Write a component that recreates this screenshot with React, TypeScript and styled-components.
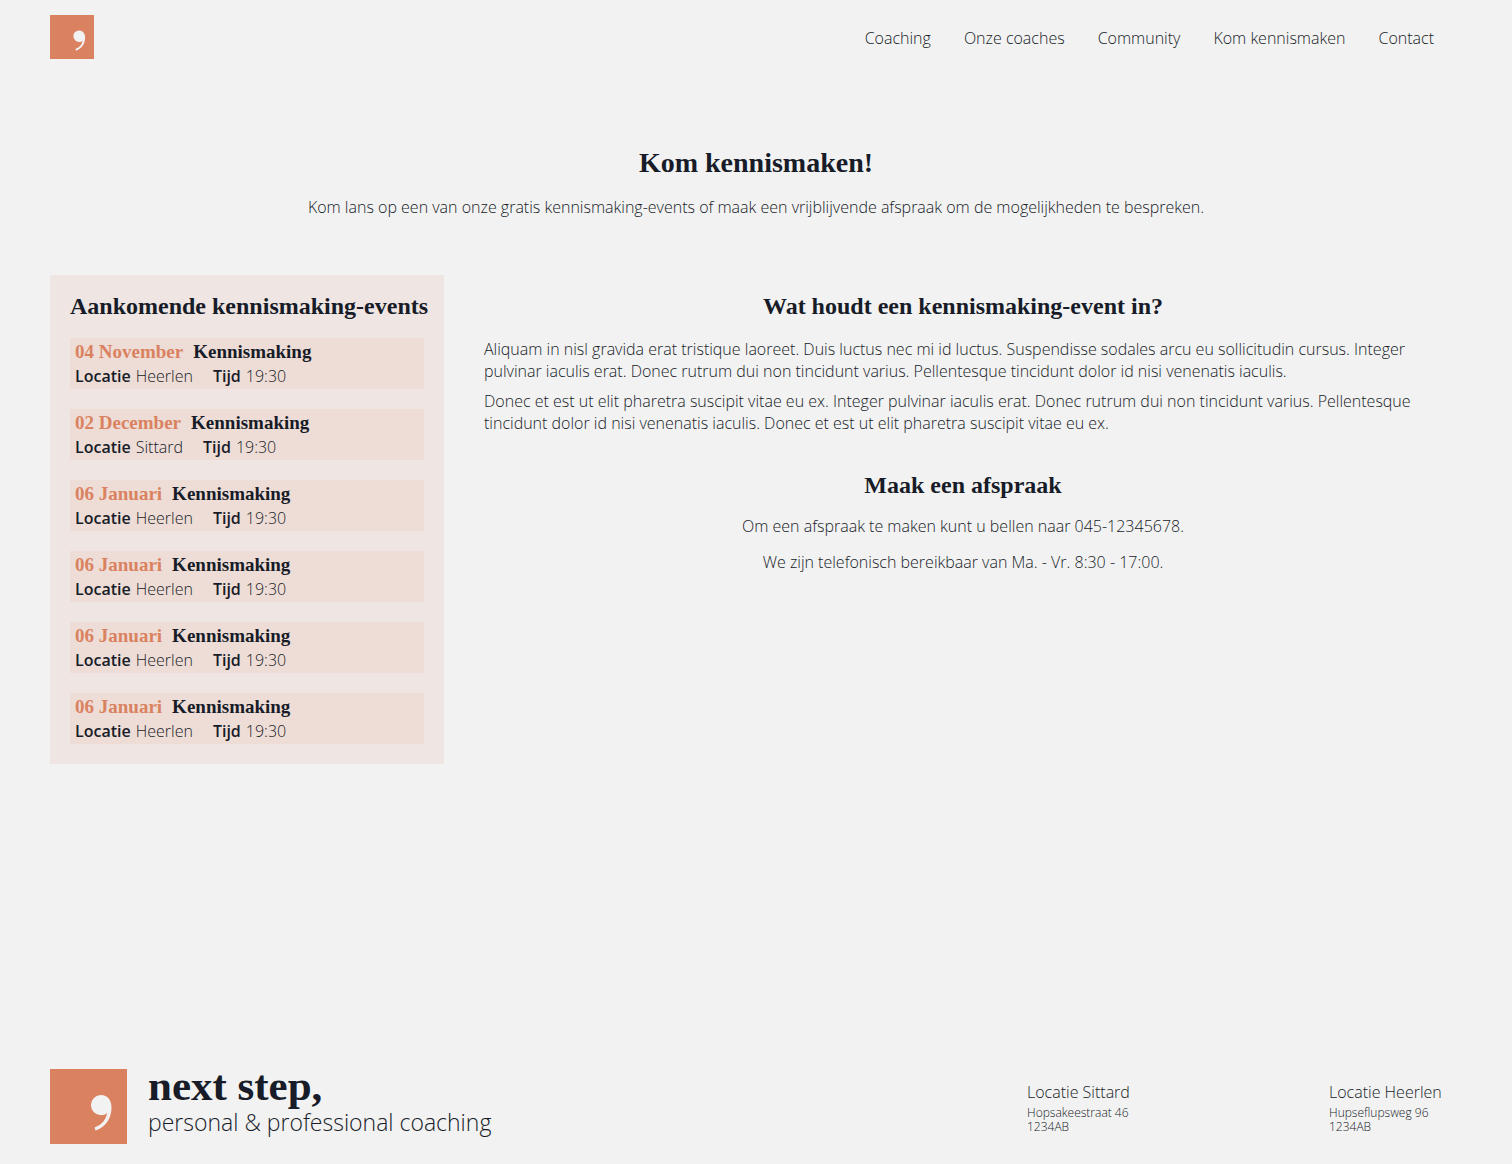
import React from "react";
import styled, { createGlobalStyle } from "styled-components";

const ink = "#171c28";
const paper = "#f2f2f2";
const accent = "#da8260";
const serif = '"Liberation Serif", "Times New Roman", serif';
const sans = '"Open Sans", "Noto Sans", sans-serif';

const GlobalStyle = createGlobalStyle`
  *, *::before, *::after { box-sizing: border-box; }
  body {
    margin: 0;
    background: ${paper};
    color: ${ink};
    font: 300 16px/22px ${sans};
  }
  h1, h2, h3, p, ul, dl, dd { margin: 0; padding: 0; }
`;

const Page = styled.div`
  display: flex;
  flex-direction: column;
  min-height: 100vh;
`;

const Header = styled.header`
  display: flex;
  align-items: center;
  justify-content: space-between;
  padding: 15px 78px 15px 50px;
`;

const HomeLink = styled.a`
  display: block;
`;

const Mark = styled.svg`
  display: block;
  flex: none;
  background: ${accent};
`;

const Nav = styled.nav`
  display: flex;
  gap: 33px;
  padding-top: 2px;
`;

const NavLink = styled.a`
  color: inherit;
  text-decoration: none;
`;

const Intro = styled.section`
  display: flex;
  flex-direction: column;
  align-items: center;
  gap: 18px;
  padding: 74px 50px 57px;
  text-align: center;
`;

const PageTitle = styled.h1`
  font: 700 28px/30px ${serif};
`;

const SectionTitle = styled.h2`
  font: 700 24px/30px ${serif};
  text-align: center;
`;

const Columns = styled.main`
  display: grid;
  grid-template-columns: 394px minmax(0, 1fr);
  align-items: start;
  gap: 40px;
  padding: 0 70px 0 50px;
`;

const Agenda = styled.aside`
  display: flex;
  flex-direction: column;
  gap: 17px;
  padding: 16px 20px 20px;
  background: #efe6e3;
`;

const AgendaTitle = styled(SectionTitle)`
  white-space: nowrap;
`;

const EventList = styled.ul`
  display: grid;
  gap: 20px;
  list-style: none;
`;

const EventCard = styled.li`
  padding: 2px 5px 1px;
  background: #eedcd6;
`;

const EventHeading = styled.h3`
  display: flex;
  gap: 10px;
  font: 700 19px/24px ${serif};
`;

const EventDate = styled.span`
  color: ${accent};
`;

const Facts = styled.dl`
  display: flex;
  gap: 20px;
  line-height: 24px;
`;

const Fact = styled.div`
  display: flex;
  gap: 5px;
`;

const FactName = styled.dt`
  font-weight: 600;
`;

const Article = styled.div`
  display: grid;
  gap: 36px;
  padding-top: 16px;
`;

const Story = styled.section`
  display: grid;
  gap: 8px;

  h2 { margin-bottom: 9px; }
`;

const Appointment = styled.section`
  display: grid;
  gap: 14px;
  text-align: center;

  h2 { margin-bottom: 1px; }
`;

const Footer = styled.footer`
  display: flex;
  align-items: center;
  justify-content: space-between;
  margin-top: auto;
  padding: 40px 70px 20px 50px;
`;

const Brand = styled.div`
  display: flex;
  gap: 21px;
`;

const BrandName = styled.p`
  font: 700 43px/34px ${serif};
`;

const Tagline = styled.p`
  font-size: 23px;
  line-height: 38px;
`;

const Locations = styled.div`
  display: grid;
  grid-template-columns: 302px 113px;
  white-space: nowrap;
`;

const Location = styled.address`
  font-style: normal;
  font-size: 12px;
  line-height: 14px;
`;

const LocationName = styled.p`
  font-size: 16px;
  line-height: 24px;
  padding-bottom: 2px;
`;

const links = ["Coaching", "Onze coaches", "Community", "Kom kennismaken", "Contact"];

const events = [
  { date: "04 November", place: "Heerlen" },
  { date: "02 December", place: "Sittard" },
  { date: "06 Januari", place: "Heerlen" },
  { date: "06 Januari", place: "Heerlen" },
  { date: "06 Januari", place: "Heerlen" },
  { date: "06 Januari", place: "Heerlen" },
];

const locations = [
  { name: "Locatie Sittard", street: "Hopsakeestraat 46", code: "1234AB" },
  { name: "Locatie Heerlen", street: "Hupseflupsweg 96", code: "1234AB" },
];

function Logo({ width, height }: { width: number; height: number }) {
  return (
    <Mark width={width} height={height} viewBox="0 0 77 75" aria-hidden="true">
      <path
        fill={paper}
        d="M51 26C57.500 26 61.500 31 61.500 38.500C61.500 49 56 58 45.500 61.500L44.500 58.500C52 55.500 56 51 57 44C55.500 45.500 53.500 46.200 51 46.200A10.100 10.100 0 0 1 51 26Z"
      />
    </Mark>
  );
}

export default function App() {
  return (
    <>
      <GlobalStyle />
      <Page>
        <Header>
          <HomeLink href="#" aria-label="next step">
            <Logo width={44} height={44} />
          </HomeLink>
          <Nav>
            {links.map((link) => (
              <NavLink href="#" key={link}>{link}</NavLink>
            ))}
          </Nav>
        </Header>

        <Intro>
          <PageTitle>Kom kennismaken!</PageTitle>
          <p>
            Kom lans op een van onze gratis kennismaking-events of maak een vrijblijvende afspraak om
            de mogelijkheden te bespreken.
          </p>
        </Intro>

        <Columns>
          <Agenda>
            <AgendaTitle>Aankomende kennismaking-events</AgendaTitle>
            <EventList>
              {events.map((event, index) => (
                <EventCard key={index}>
                  <EventHeading>
                    <EventDate>{event.date}</EventDate>
                    <span>Kennismaking</span>
                  </EventHeading>
                  <Facts>
                    <Fact>
                      <FactName>Locatie</FactName>
                      <dd>{event.place}</dd>
                    </Fact>
                    <Fact>
                      <FactName>Tijd</FactName>
                      <dd>19:30</dd>
                    </Fact>
                  </Facts>
                </EventCard>
              ))}
            </EventList>
          </Agenda>

          <Article>
            <Story>
              <SectionTitle>Wat houdt een kennismaking-event in?</SectionTitle>
              <p>
                Aliquam in nisl gravida erat tristique laoreet. Duis luctus nec mi id luctus.
                Suspendisse sodales arcu eu sollicitudin cursus. Integer pulvinar iaculis erat. Donec
                rutrum dui non tincidunt varius. Pellentesque tincidunt dolor id nisi venenatis
                iaculis.
              </p>
              <p>
                Donec et est ut elit pharetra suscipit vitae eu ex. Integer pulvinar iaculis erat.
                Donec rutrum dui non tincidunt varius. Pellentesque tincidunt dolor id nisi venenatis
                iaculis. Donec et est ut elit pharetra suscipit vitae eu ex.
              </p>
            </Story>
            <Appointment>
              <SectionTitle>Maak een afspraak</SectionTitle>
              <p>Om een afspraak te maken kunt u bellen naar 045-12345678.</p>
              <p>We zijn telefonisch bereikbaar van Ma. - Vr. 8:30 - 17:00.</p>
            </Appointment>
          </Article>
        </Columns>

        <Footer>
          <Brand>
            <Logo width={77} height={75} />
            <div>
              <BrandName>next step,</BrandName>
              <Tagline>personal &amp; professional coaching</Tagline>
            </div>
          </Brand>
          <Locations>
            {locations.map((location) => (
              <Location key={location.name}>
                <LocationName>{location.name}</LocationName>
                <p>{location.street}</p>
                <p>{location.code}</p>
              </Location>
            ))}
          </Locations>
        </Footer>
      </Page>
    </>
  );
}
